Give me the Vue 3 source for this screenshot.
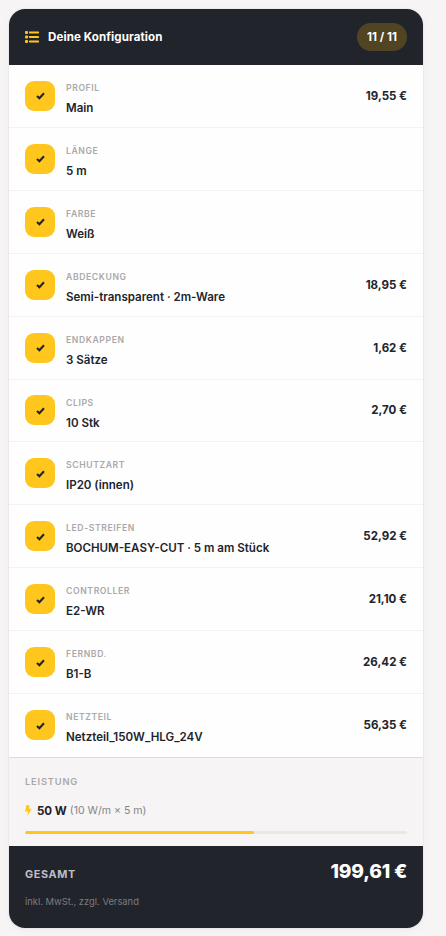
<script setup>
const items = [
  { label: 'Profil', value: 'Main', price: '19,55 €' },
  { label: 'Länge', value: '5 m' },
  { label: 'Farbe', value: 'Weiß' },
  { label: 'Abdeckung', value: 'Semi-transparent · 2m-Ware', price: '18,95 €' },
  { label: 'Endkappen', value: '3 Sätze', price: '1,62 €' },
  { label: 'Clips', value: '10 Stk', price: '2,70 €' },
  { label: 'Schutzart', value: 'IP20 (innen)' },
  { label: 'LED-Streifen', value: 'BOCHUM-EASY-CUT · 5 m am Stück', price: '52,92 €' },
  { label: 'Controller', value: 'E2-WR', price: '21,10 €' },
  { label: 'Fernbd.', value: 'B1-B', price: '26,42 €' },
  { label: 'Netzteil', value: 'Netzteil_150W_HLG_24V', price: '56,35 €' },
]
const load = 60
</script>

<template>
  <main class="page">
    <section class="card">
      <header class="head">
        <svg class="list-icon" viewBox="0 0 14 12" aria-hidden="true">
          <rect x="0" y="0" width="3" height="3" rx="1" />
          <rect x="0" y="4.500" width="3" height="3" rx="1" />
          <rect x="0" y="9" width="3" height="3" rx="1" />
          <rect x="4" y="0.5" width="10" height="2" rx="0.4" />
          <rect x="4" y="5" width="10" height="2" rx="0.4" />
          <rect x="4" y="9.500" width="10" height="2" rx="0.4" />
        </svg>
        <h1 class="title">Deine Konfiguration</h1>
        <span class="badge">11 / 11</span>
      </header>

      <ul class="rows">
        <li v-for="item in items" :key="item.label" class="row">
          <span class="tile">
            <svg class="check" viewBox="0 0 9 9" aria-hidden="true">
              <path d="M1 4.900L3.400 7.200L8 2.300" />
            </svg>
          </span>
          <div class="info">
            <div class="label">{{ item.label }}</div>
            <div class="value">{{ item.value }}</div>
          </div>
          <span v-if="item.price" class="price">{{ item.price }}</span>
        </li>
      </ul>

      <div class="power">
        <div class="power-label">Leistung</div>
        <div class="power-line">
          <svg class="bolt" viewBox="0 0 7 12" aria-hidden="true">
            <path d="M1.300 0.300H4.700L3.900 3.800H6.500L2.400 11.600L3.200 6.600H0.200Z" />
          </svg>
          <strong class="watt">50 W</strong>
          <span class="calc">(10 W/m × 5 m)</span>
        </div>
        <div class="track"><div class="fill" :style="{ width: load + '%' }"></div></div>
      </div>

      <footer class="total">
        <div class="total-line">
          <span class="total-label">Gesamt</span>
          <span class="sum">199,61 €</span>
        </div>
        <div class="note">inkl. MwSt., zzgl. Versand</div>
      </footer>
    </section>
  </main>
</template>

<style>
body {
  background: #f6f4f5;
}
</style>

<style scoped>
.page {
  box-sizing: border-box;
  height: 936px;
  padding: 9px 23px 8px 9px;
  overflow: hidden;
  font-family: Inter, sans-serif;
  color: #22242c;
}
.card {
  height: 919px;
  display: flex;
  flex-direction: column;
  border-radius: 16px;
  overflow: hidden;
  background: #fefefe;
  box-shadow: 0 0 0 1px rgba(34, 36, 44, 0.03), 0 2px 8px rgba(34, 36, 44, 0.04);
}
.head {
  box-sizing: border-box;
  height: 56px;
  padding: 0 16px;
  display: flex;
  align-items: center;
  background: #22242c;
  color: #fff;
}
.list-icon {
  width: 14px;
  height: 12px;
  margin-right: 9px;
  fill: #ffc61e;
}
.title {
  margin: 0;
  font-size: 11.52px;
  font-weight: 700;
  line-height: 18px;
  letter-spacing: 0.13px;
}
.badge {
  margin-left: auto;
  width: 50px;
  height: 28px;
  border-radius: 14px;
  background: #514423;
  font-size: 11.52px;
  font-weight: 700;
  line-height: 28px;
  text-align: center;
}
.rows {
  list-style: none;
  margin: 0;
  padding: 0;
}
.row {
  box-sizing: border-box;
  height: 62.92px;
  padding: 0 16px;
  display: flex;
  align-items: center;
  border-bottom: 1px solid #f3f2f3;
}
.row:last-child {
  border-bottom-color: transparent;
}
.tile {
  width: 30px;
  height: 30px;
  margin-right: 11px;
  display: grid;
  place-items: center;
  border-radius: 9px;
  background: #ffc61e;
}
.check {
  width: 9px;
  height: 9px;
  fill: none;
  stroke: #22242c;
  stroke-width: 2.1;
}
.info {
  flex: 1;
  padding-top: 6.2px;
}
.label {
  font-size: 8.64px;
  font-weight: 600;
  line-height: 14px;
  letter-spacing: 0.6px;
  text-transform: uppercase;
  color: #a9a9ab;
}
.value {
  margin-top: 4px;
  font-size: 11.55px;
  font-weight: 600;
  line-height: 18px;
}
.price {
  font-size: 11.52px;
  font-weight: 700;
  line-height: 18px;
}
.power {
  box-sizing: border-box;
  height: 88.88px;
  padding: 16px 16px 0;
  border-top: 1px solid #dddbe0;
  background: #f6f4f5;
}
.power-label {
  font-size: 9.28px;
  font-weight: 600;
  line-height: 16px;
  letter-spacing: 0.85px;
  text-transform: uppercase;
  color: #a9a9ab;
}
.power-line {
  margin-top: 12px;
  display: flex;
  align-items: center;
  line-height: 18px;
}
.bolt {
  width: 7px;
  height: 12px;
  margin-right: 5px;
  fill: #ffc61e;
}
.watt {
  margin-right: 3px;
  font-size: 11.52px;
  font-weight: 700;
}
.calc {
  font-size: 10.56px;
  color: #858487;
}
.track {
  margin-top: 11px;
  height: 3px;
  border-radius: 2px;
  background: #e9e7e7;
  overflow: hidden;
}
.fill {
  height: 100%;
  border-radius: 2px;
  background: #ffc61e;
}
.total {
  flex: 1;
  padding: 10px 16px 0;
  background: #22242c;
}
.total-line {
  display: flex;
  align-items: flex-start;
  justify-content: space-between;
}
.total-label {
  padding-top: 10px;
  font-size: 10.88px;
  font-weight: 700;
  line-height: 16px;
  letter-spacing: 0.6px;
  text-transform: uppercase;
  color: #bdbfc5;
}
.sum {
  font-size: 19.2px;
  font-weight: 800;
  line-height: 30px;
  letter-spacing: -0.2px;
  color: #fff;
}
.note {
  margin-top: 8px;
  font-size: 9.4px;
  line-height: 16px;
  color: #7b7c82;
}
</style>
